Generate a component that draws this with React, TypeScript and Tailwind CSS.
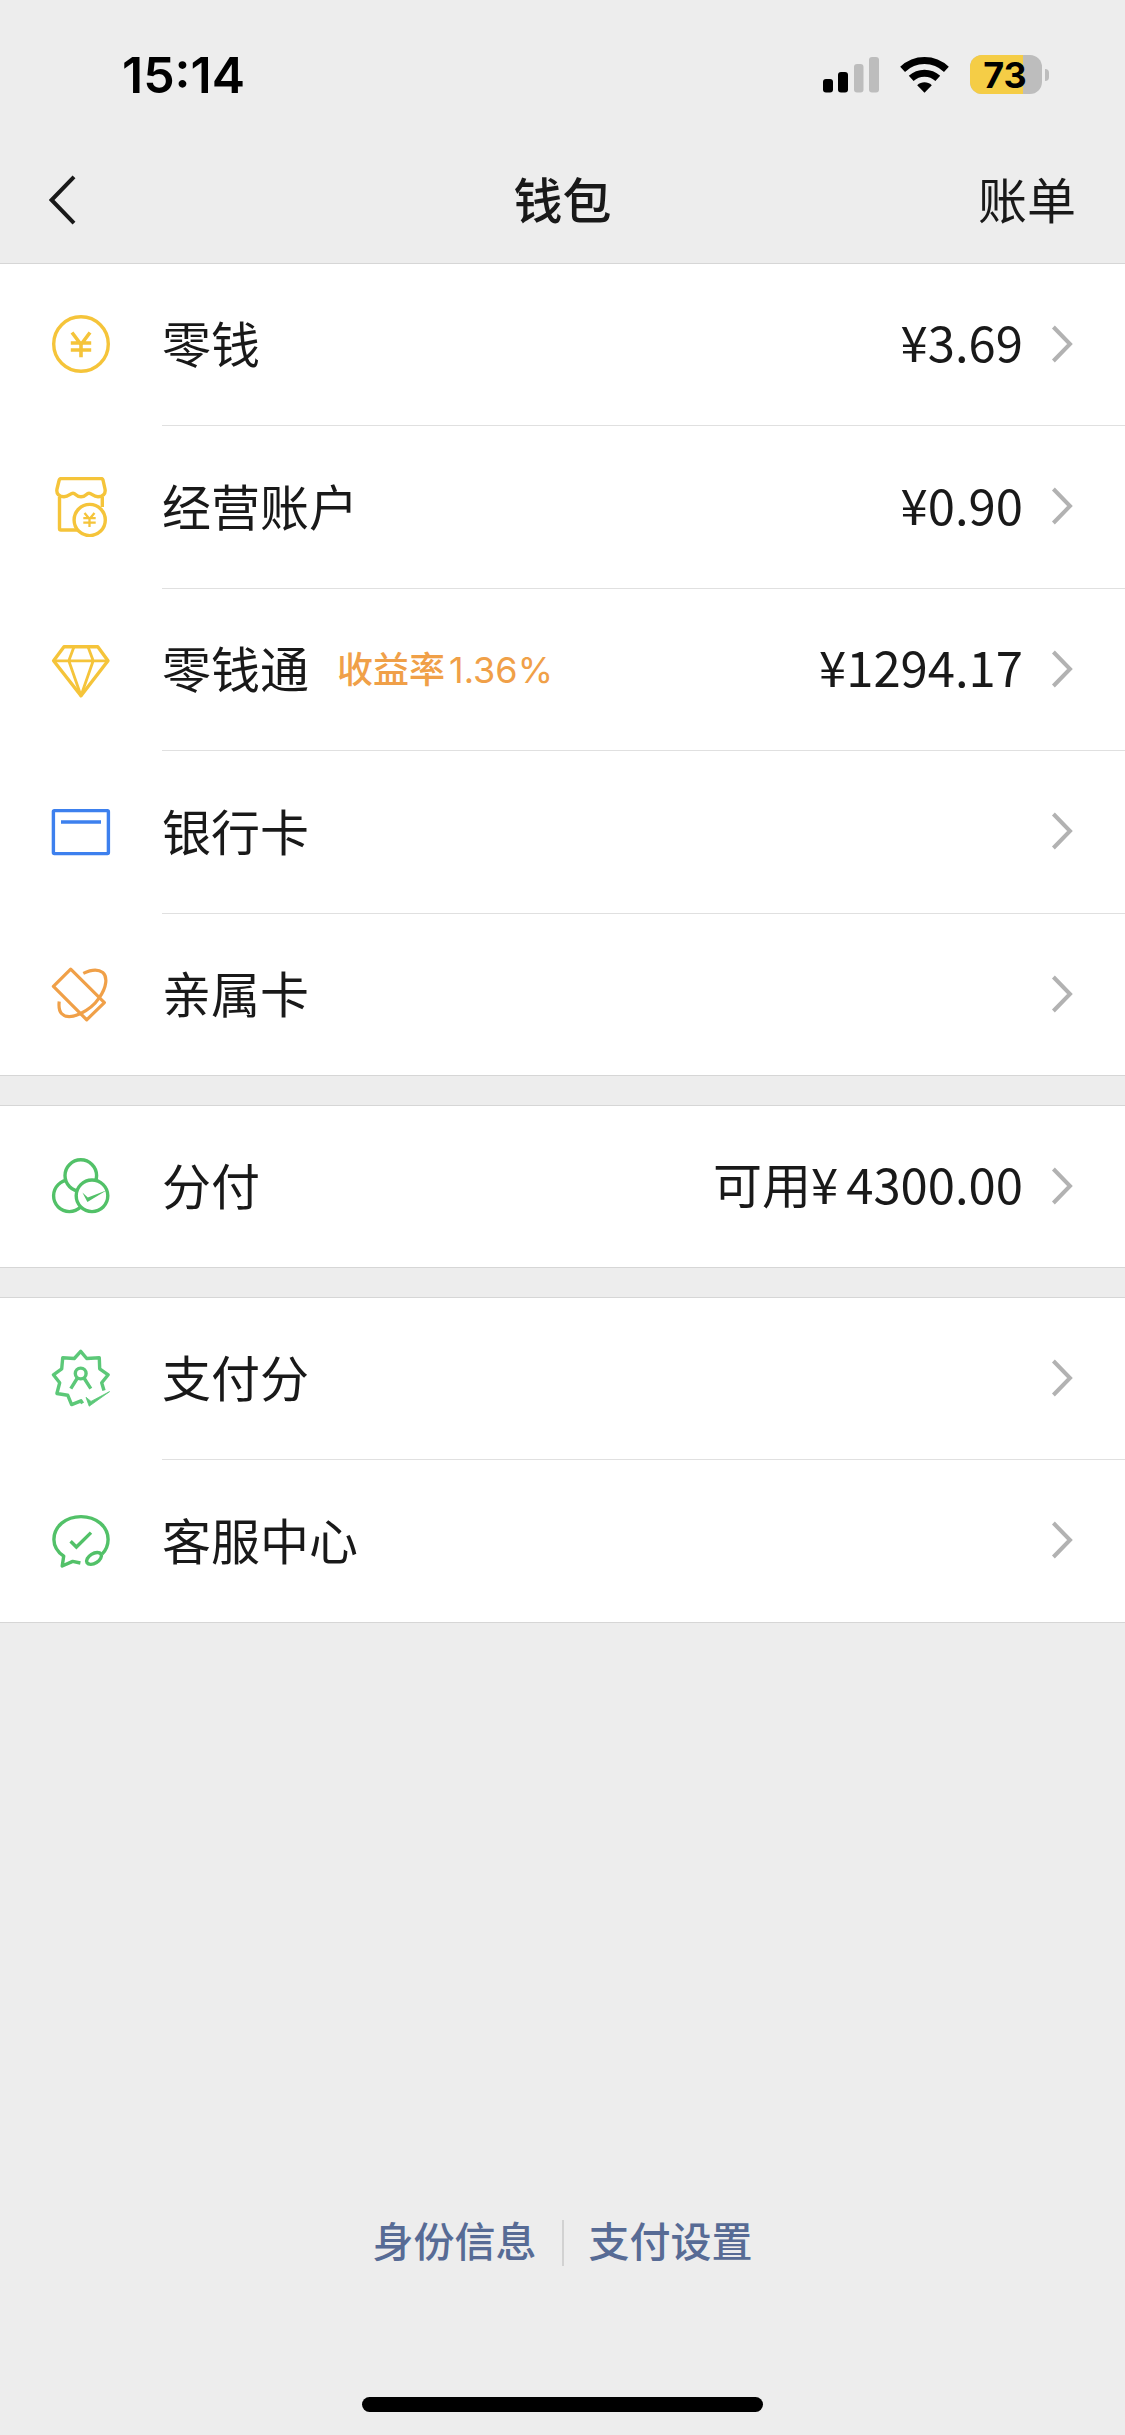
import React from 'react';

type IconProps = { children: React.ReactNode; color: string };

// Shared 60px canvas for the row icons
function RowIcon({ children, color }: IconProps) {
  return (
    <svg
      viewBox="0 0 60 60"
      className="w-[60px] h-[60px] shrink-0"
      fill="none"
      stroke={color}
      strokeWidth={3.4}
      strokeLinejoin="round"
      aria-hidden="true"
    >
      {children}
    </svg>
  );
}

const YELLOW = '#f5c43a';
const ORANGE = '#f0a048';
const BLUE = '#3d80ee';
const GREEN = '#52c168';

function CoinIcon() {
  return (
    <RowIcon color={YELLOW}>
      <circle cx="30" cy="30" r="27.3" />
      <path d="M21 18.5 30 30.5 39 18.5M19.8 29H40.2M19.8 36H40.2M30 30V43.2" strokeWidth={3.6} strokeLinejoin="miter" />
    </RowIcon>
  );
}

function ShopIcon() {
  return (
    <RowIcon color={YELLOW}>
      <path d="M8.5 20V51.5Q8.5 53 10 53H26M51.3 20V30" />
      <path
        d="M10.5 1.5H50Q51.6 1.5 52 3L54 12C55 17 51.5 19.8 47 19.8C42 19.8 41 16.3 38 16.3C35 16.3 35 19.8 30 19.8C25 19.8 25 16.3 22 16.3C19 16.3 18 19.8 13 19.8C8.5 19.8 5 17 6 12L8.2 3Q8.6 1.5 10.5 1.5Z"
        fill="#fff"
      />
      <circle cx="38.7" cy="43" r="15.6" fill="#fff" />
      <path d="M33.5 36 38.5 42 43.5 36M32.3 41.2H44.7M32.3 45.6H44.7M38.5 41V50" strokeWidth={2.3} strokeLinejoin="miter" />
    </RowIcon>
  );
}

function DiamondIcon() {
  return (
    <RowIcon color={YELLOW}>
      <path d="M13 7.8H46.8L57 21.8 30 56.8 2.6 21.8Z" />
      <path d="M2.6 21.8H57M23 7.8 17.8 21.8 30 56.8 42.2 21.8 37 7.8" strokeWidth={2.8} />
    </RowIcon>
  );
}

function BankCardIcon() {
  return (
    <RowIcon color={BLUE}>
      <rect x="2.4" y="8.6" width="55" height="43" rx="1" />
      <path d="M10 20H50" />
    </RowIcon>
  );
}

function FamilyCardIcon() {
  return (
    <RowIcon color={ORANGE}>
      <path d="M19.7 5.2 2.4 22.4 35.7 55.8 53.4 38.6Z" strokeWidth={3.2} />
      <path
        d="M32.3 9.4C41 5.2 47.5 5.3 51.8 8.5C56.5 12.5 56.2 22.5 48 34.2C42.8 42 36.5 46.2 29.7 49.5C22 53 14.5 53.8 10.5 49.5C8.2 47 7.6 43 8.2 37.5"
        strokeWidth={3.2}
      />
    </RowIcon>
  );
}

function ClusterIcon() {
  return (
    <RowIcon color={GREEN}>
      <circle cx="18.4" cy="39.8" r="15.8" />
      <circle cx="29.8" cy="19.6" r="15.8" fill="#fff" />
      <circle cx="41" cy="39.8" r="15.8" fill="#fff" />
      <path d="M31.4 36.6 36.8 41.4 55.8 34.2 36.4 46Z" fill={GREEN} stroke="none" />
    </RowIcon>
  );
}

function ScoreIcon() {
  return (
    <RowIcon color="#5cc878">
      <path d="M53 42.6 50.7 34.8 57.2 26.8 48.7 20.8 48.3 9.8 35.7 10.5 29.7 3.4 23.3 10.5 11.7 9.8 10.7 20.8 2.4 26.8 8.7 34.8 5.9 45.5 16.7 47.2 20.6 56.6 30 52.8 31.6 55.4" />
      <circle cx="29.7" cy="25.5" r="5.4" />
      <path d="M26.4 30 19.8 40.6M33 30 39.8 40.6" />
      <path d="M35 49.3 40 53.4 58.6 43.6 38.2 58.2Z" fill="#5cc878" stroke="#5cc878" strokeWidth={0.8} />
    </RowIcon>
  );
}

function ServiceIcon() {
  return (
    <RowIcon color={GREEN}>
      <path d="M29.4 53 21.7 51.4 11.2 56 12.7 46.2C6.5 41.8 2.9 36 2.9 29.4C2.9 16.5 14.8 6.6 30 6.6C45.2 6.6 57.1 16.5 57.1 29.4C57.1 35 55 40 51 44.2" />
      <path d="M19.6 31.2 25.4 37 40 22.6" strokeLinejoin="miter" />
      <ellipse cx="43" cy="48.4" rx="8.2" ry="4.8" transform="rotate(-32 43 48.4)" />
    </RowIcon>
  );
}

function Chevron() {
  return (
    <svg viewBox="0 0 22 40" className="w-[22px] h-10 shrink-0" fill="none" stroke="#b2b2b2" strokeWidth={4} aria-hidden="true">
      <path d="M2.4 3 19 20 2.4 37" />
    </svg>
  );
}

function SignalBars() {
  return (
    <svg viewBox="0 0 56 36" className="w-14 h-9" aria-hidden="true">
      <rect x="0" y="22" width="10" height="13.5" rx="3" fill="#000" />
      <rect x="15" y="15" width="10" height="20.5" rx="3" fill="#000" />
      <rect x="31" y="7" width="9.5" height="28.5" rx="3" fill="#bdbdbd" />
      <rect x="46" y="0" width="10" height="35.5" rx="3" fill="#bdbdbd" />
    </svg>
  );
}

function WifiIcon() {
  return (
    <svg viewBox="0 0 49 36" className="w-[49px] h-9" aria-hidden="true">
      <path d="M2.6 12.4C15 .6 34 .6 46.4 12.4" fill="none" stroke="#000" strokeWidth={7} />
      <path d="M11.2 21.4C18.6 14.4 30.4 14.4 37.8 21.4" fill="none" stroke="#000" strokeWidth={7} />
      <path d="M17.2 28.2C21.4 24.4 27.6 24.4 31.8 28.2L24.5 35.8Z" fill="#000" />
    </svg>
  );
}

function Battery({ level }: { level: number }) {
  return (
    <div className="flex items-center gap-[3px]">
      <div className="relative w-[72px] h-[39px] rounded-[12px] bg-[#bdbdbd]">
        <div className="absolute inset-y-0 left-0 rounded-l-[12px] bg-[#f5cd46]" style={{ width: `${level}%` }} />
        <div className="relative h-full flex items-center justify-center pr-[2px] font-[Inter,sans-serif] font-bold text-[36px] leading-none">
          {level}
        </div>
      </div>
      <div className="w-1 h-3 rounded-r-full bg-[#bdbdbd]" />
    </div>
  );
}

type Item = {
  label: string;
  icon: React.ReactNode;
  note?: string;
  rate?: string;
  prefix?: string;
  amount?: string;
};

const groups: Item[][] = [
  [
    { label: '零钱', icon: <CoinIcon />, amount: '¥3.69' },
    { label: '经营账户', icon: <ShopIcon />, amount: '¥0.90' },
    { label: '零钱通', icon: <DiamondIcon />, note: '收益率', rate: '1.36%', amount: '¥1294.17' },
    { label: '银行卡', icon: <BankCardIcon /> },
    { label: '亲属卡', icon: <FamilyCardIcon /> },
  ],
  [{ label: '分付', icon: <ClusterIcon />, prefix: '可用¥', amount: '4300.00' }],
  [
    { label: '支付分', icon: <ScoreIcon /> },
    { label: '客服中心', icon: <ServiceIcon /> },
  ],
];

function Row({ item }: { item: Item }) {
  return (
    <li className="group flex odd:h-[162px] even:h-[163px] last:border-b last:border-[#d6d6d6]">
      <a href="#" className="flex-1 flex pl-[51px]">
        <span className="w-[111px] flex items-center pb-0.5">{item.icon}</span>
        <span className="flex-1 flex items-center pr-[52px] pb-0.5 border-b border-[#e0e0e0] group-last:border-b-0">
          <span className="pb-1 text-[49px] leading-none">{item.label}</span>
          {item.note && (
            <span className="ml-7 flex items-baseline gap-1 text-[36px] leading-none text-[#f0a048]">
              <span className="font-medium">{item.note}</span>
              <span className="font-[Inter,sans-serif]">{item.rate}</span>
            </span>
          )}
          <span className="ml-auto flex items-center gap-7">
            {item.amount && (
              <span className="flex gap-2 pb-1.5 text-[49px] leading-none">
                {item.prefix && <span>{item.prefix}</span>}
                <span>{item.amount}</span>
              </span>
            )}
            <Chevron />
          </span>
        </span>
      </a>
    </li>
  );
}

export default function App() {
  return (
    <div className="min-h-screen flex flex-col bg-[#ededed] text-[#191919] font-['Noto_Sans_CJK_SC',sans-serif]">
      <header>
        <div className="h-[149px] flex items-center justify-between pl-[122px] pr-[76px] text-black">
          <time className="font-[Inter,sans-serif] font-semibold text-[50px] leading-none">15:14</time>
          <div className="flex items-center gap-[21px]">
            <SignalBars />
            <WifiIcon />
            <Battery level={73} />
          </div>
        </div>
        <nav className="h-[114px] pb-3 px-[49px] grid grid-cols-3 items-center text-[49px] leading-none">
          <button type="button" aria-label="返回" className="justify-self-start cursor-pointer">
            <svg viewBox="0 0 28 50" className="w-7 h-[50px]" fill="none" stroke="#191919" strokeWidth={4}>
              <path d="M25 1.8 2.6 25 25 48.2" />
            </svg>
          </button>
          <h1 className="justify-self-center pb-1.5 font-medium">钱包</h1>
          <button type="button" className="justify-self-end pb-1.5 cursor-pointer">账单</button>
        </nav>
      </header>

      <main className="flex flex-col gap-[29px]">
        {groups.map((items, i) => (
          <ul key={i} className="bg-white border-t border-[#d6d6d6]">
            {items.map((item) => (
              <Row key={item.label} item={item} />
            ))}
          </ul>
        ))}
      </main>

      <footer className="mt-auto flex flex-col items-center gap-[131px] pb-[23px]">
        <div className="flex items-center gap-[25px] font-medium text-[41px] leading-none text-[#576b95]">
          <a href="#" className="pb-1.5">身份信息</a>
          <span className="w-[2px] h-[46px] bg-[#d2d2d2]" />
          <a href="#" className="pb-1.5">支付设置</a>
        </div>
        {/* Home indicator */}
        <div className="w-[401px] h-[15px] rounded-full bg-black" />
      </footer>
    </div>
  );
}
